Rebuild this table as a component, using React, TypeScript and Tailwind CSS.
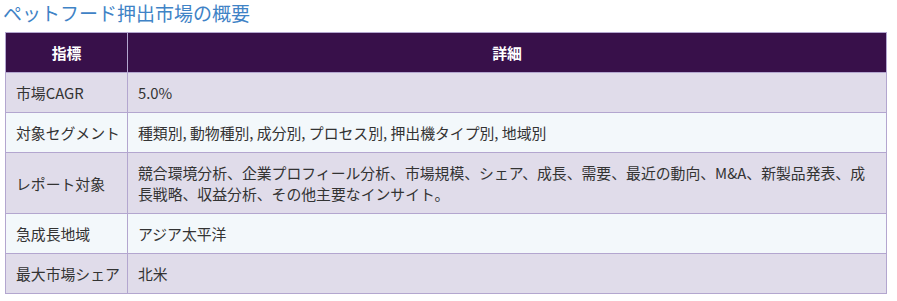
const rows: { label: string; value: string }[] = [
  { label: "市場CAGR", value: "5.0%" },
  {
    label: "対象セグメント",
    value: "種類別, 動物種別, 成分別, プロセス別, 押出機タイプ別, 地域別",
  },
  {
    label: "レポート対象",
    value:
      "競合環境分析、企業プロフィール分析、市場規模、シェア、成長、需要、最近の動向、M&A、新製品発表、成長戦略、収益分析、その他主要なインサイト。",
  },
  { label: "急成長地域", value: "アジア太平洋" },
  { label: "最大市場シェア", value: "北米" },
];

const App: React.FC = () => {
  return (
    <div
      className="w-[897px] h-[301px] bg-white pt-[1px]"
      style={{ fontFamily: '"Noto Sans CJK JP", "Noto Sans", sans-serif' }}
    >
      <h2 className="ml-[3px] text-[19px] leading-[24px] font-normal text-[#3f83c6]">
        ペットフード押出市場の概要
      </h2>
      <table className="ml-[5px] mt-[7px] w-[882px] table-fixed border-collapse text-[14.85px] text-[#333]">
        <thead>
          <tr className="bg-[#38104a] text-white">
            <th className="w-[122px] border border-[#b3a6cf] py-[9px] leading-[21px] font-bold text-center">
              指標
            </th>
            <th className="border border-[#b3a6cf] py-[9px] leading-[21px] font-bold text-center">
              詳細
            </th>
          </tr>
        </thead>
        <tbody>
          {rows.map((row, i) => (
            <tr
              key={row.label}
              className={i % 2 === 0 ? "bg-[#e0dcea]" : "bg-[#f3f8fb]"}
            >
              <td className="border border-[#b3a6cf] pl-[10px] pr-[2px] py-[9px] leading-[21px] whitespace-nowrap">
                {row.label}
              </td>
              <td className="border border-[#b3a6cf] px-[10px] py-[9px] leading-[21px]">
                {row.value}
              </td>
            </tr>
          ))}
        </tbody>
      </table>
    </div>
  );
};

export default App;
